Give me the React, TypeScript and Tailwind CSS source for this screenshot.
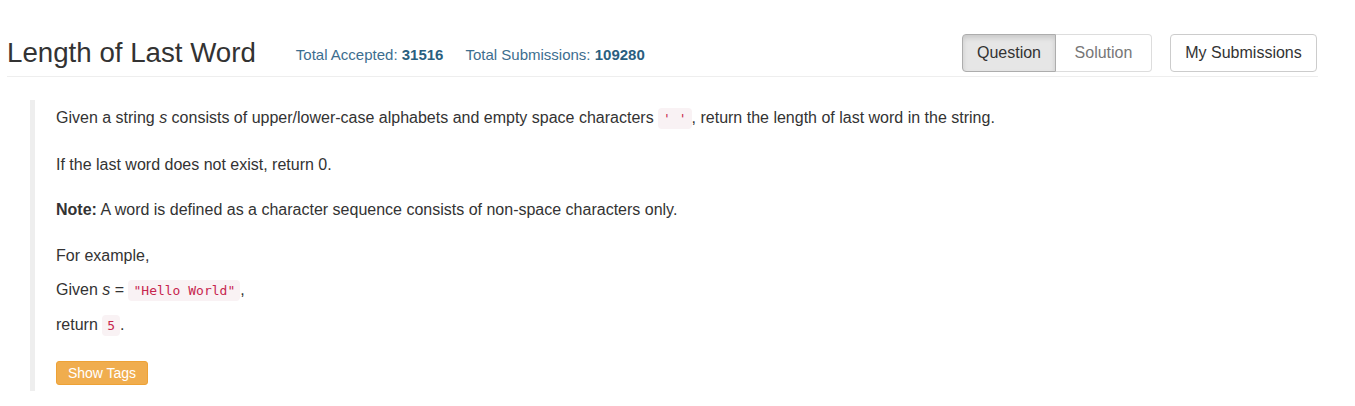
import React from "react";

const sans = "font-['Liberation_Sans',Arial,sans-serif]";
const code =
  "font-['DejaVu_Sans_Mono',monospace] text-[13px] text-[#c7254e] bg-[#f9f2f4] rounded-[4px] px-[5px] py-[3px]";

function Header() {
  return (
    <div className="flex items-center h-[77px] pt-[30px] border-b border-[#eeeeee]">
      <h3 className="text-[27.7px] leading-none text-[#333333] font-normal">
        Length of Last Word
      </h3>
      <div className="ml-[40px] mt-[4px] text-[15px] text-[#3d6e8f] flex gap-[22px]">
        <span>
          Total Accepted: <b className="text-[#2a5f80]">31516</b>
        </span>
        <span>
          Total Submissions: <b className="text-[#2a5f80]">109280</b>
        </span>
      </div>
      <div className="ml-auto flex items-center gap-[18px] mr-[1px]">
        <div className="flex">
          <button className="h-[38px] w-[94px] text-[16px] text-[#333333] bg-[#e6e6e6] border border-[#adadad] rounded-l-[4px] shadow-[inset_0_3px_5px_rgba(0,0,0,0.125)]">
            Question
          </button>
          <button className="h-[38px] w-[96px] text-[16px] text-[#777777] bg-white border border-l-0 border-[#dddddd] rounded-r-[4px]">
            Solution
          </button>
        </div>
        <button className="h-[38px] w-[147px] text-[16px] text-[#333333] bg-white border border-[#cccccc] rounded-[4px]">
          My Submissions
        </button>
      </div>
    </div>
  );
}

export default function App() {
  return (
    <div className={`${sans} bg-white w-[1355px] h-[406px] overflow-hidden`}>
      <div className="ml-[7px] w-[1311px]">
        <Header />
        <div className="mt-[23px] ml-[23px] border-l-[5px] border-[#eeeeee] pl-[21px] pt-[7px] pb-[6px] text-[16px] text-[#333333]">
          <p className="leading-[22px]">
            Given a string <i>s</i> consists of upper/lower-case alphabets and
            empty space characters <code className={code}>' '</code>, return
            the length of last word in the string.
          </p>
          <p className="leading-[22px] mt-[24px]">
            If the last word does not exist, return 0.
          </p>
          <p className="leading-[22px] mt-[23px]">
            <b>Note:</b> A word is defined as a character sequence consists of
            non-space characters only.
          </p>
          <p className="leading-[22px] mt-[24px]">For example,</p>
          <p className="leading-[22px] mt-[12px]">
            Given <i>s</i> = <code className={code}>"Hello World"</code>,
          </p>
          <p className="leading-[22px] mt-[12px]">
            return <code className={code}>5</code>.
          </p>
          <button className="mt-[24px] h-[24px] w-[92px] text-[14px] text-white bg-[#f0ad4e] border border-[#eea236] rounded-[3px] leading-none">
            Show Tags
          </button>
        </div>
      </div>
    </div>
  );
}
